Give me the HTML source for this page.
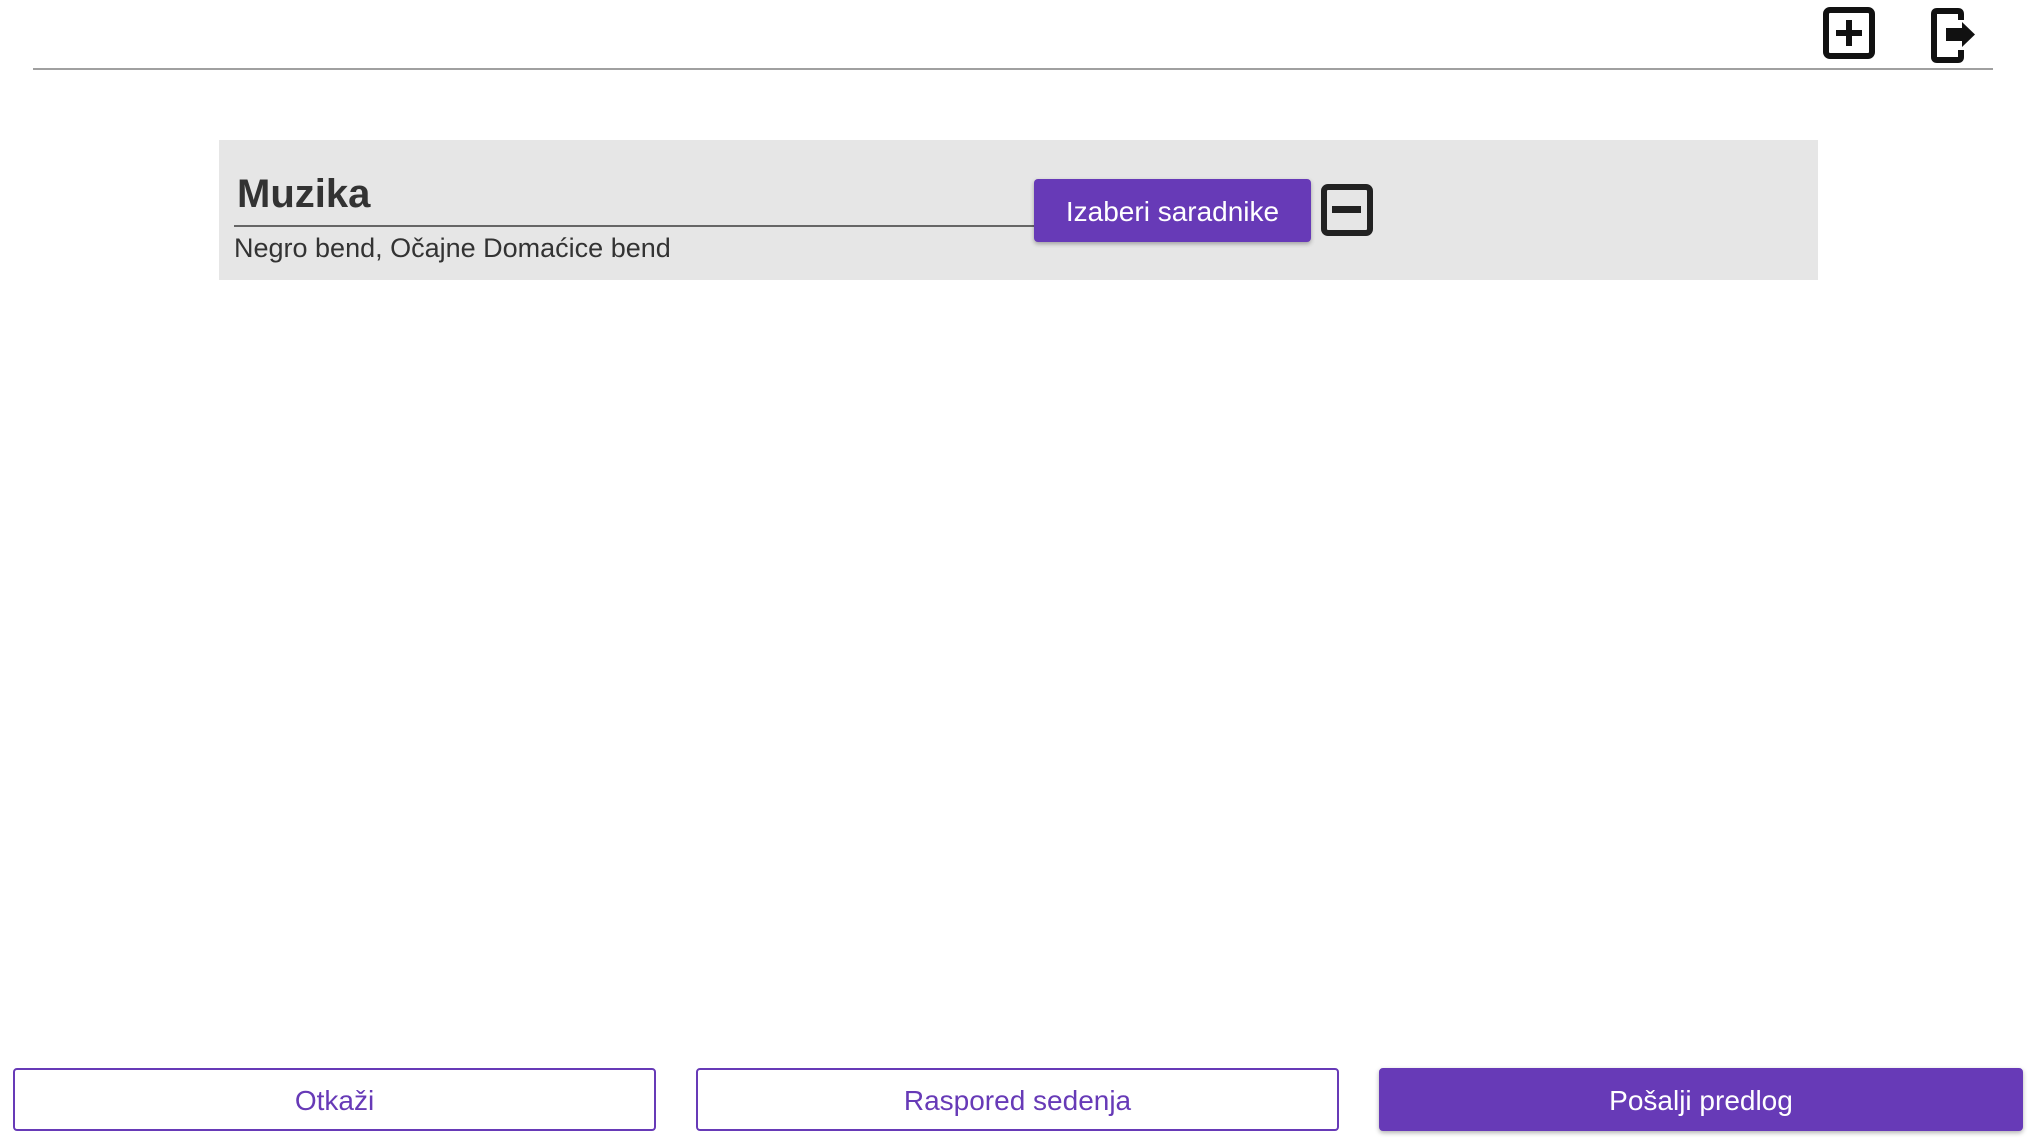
<!DOCTYPE html>
<html><head><meta charset="utf-8"><style>
*{margin:0;padding:0;box-sizing:border-box}
body{width:2040px;height:1144px;background:#fff;position:relative;overflow:hidden;font-family:"Liberation Sans",sans-serif}
.abs{position:absolute}
.btn{position:absolute;top:1068px;height:63px;border:2px solid #673ab7;border-radius:4px;color:#673ab7;font-size:28px;display:flex;align-items:center;justify-content:center;background:#fff;padding-top:3px}
</style></head><body>
<div class="abs" style="left:33px;top:68px;width:1960px;height:2px;background:#a0a0a0"></div>
<svg class="abs" style="left:1820px;top:0" width="60" height="64" viewBox="1820 0 60 64">
<rect x="1826" y="10" width="46" height="46" rx="4" fill="none" stroke="#111" stroke-width="6"/>
<rect x="1836" y="30" width="26" height="6" fill="#111"/><rect x="1846" y="20" width="6" height="26" fill="#111"/>
</svg>
<svg class="abs" style="left:1925px;top:0" width="60" height="64" viewBox="1925 0 60 64">
<path d="M1961 20 V14 Q1961 11 1958 11 H1937 Q1934 11 1934 14 V57 Q1934 60 1937 60 H1958 Q1961 60 1961 57 V50" fill="none" stroke="#111" stroke-width="6"/>
<rect x="1946" y="28" width="17" height="13" fill="#111"/><path d="M1962 22 L1975 34.5 L1962 47 Z" fill="#111"/>
</svg>
<div class="abs" style="left:219px;top:140px;width:1599px;height:140px;background:#e6e6e6"></div>
<div class="abs" style="left:237px;top:172px;font-size:40px;font-weight:bold;color:#333">Muzika</div>
<div class="abs" style="left:234px;top:225px;width:802px;height:2px;background:#666"></div>
<div class="abs" style="left:234px;top:233px;font-size:27px;color:#333">Negro bend, Očajne Domaćice bend</div>
<div class="abs" style="left:1034px;top:179px;width:277px;height:63px;background:#673ab7;border-radius:4px;color:#fff;font-size:28px;display:flex;align-items:center;justify-content:center;box-shadow:0 2px 4px rgba(0,0,0,.3);padding-top:3px">Izaberi saradnike</div>
<svg class="abs" style="left:1318px;top:182px" width="58" height="58" viewBox="1318 182 58 58">
<rect x="1324" y="187" width="46" height="46" rx="4" fill="none" stroke="#222" stroke-width="6"/>
<rect x="1332" y="206" width="29" height="7" fill="#222"/>
</svg>
<div class="btn" style="left:13px;width:643px">Otkaži</div>
<div class="btn" style="left:696px;width:643px">Raspored sedenja</div>
<div class="btn" style="left:1379px;width:644px;background:#673ab7;color:#fff;box-shadow:0 2px 5px rgba(0,0,0,.3)">Pošalji predlog</div>
</body></html>
